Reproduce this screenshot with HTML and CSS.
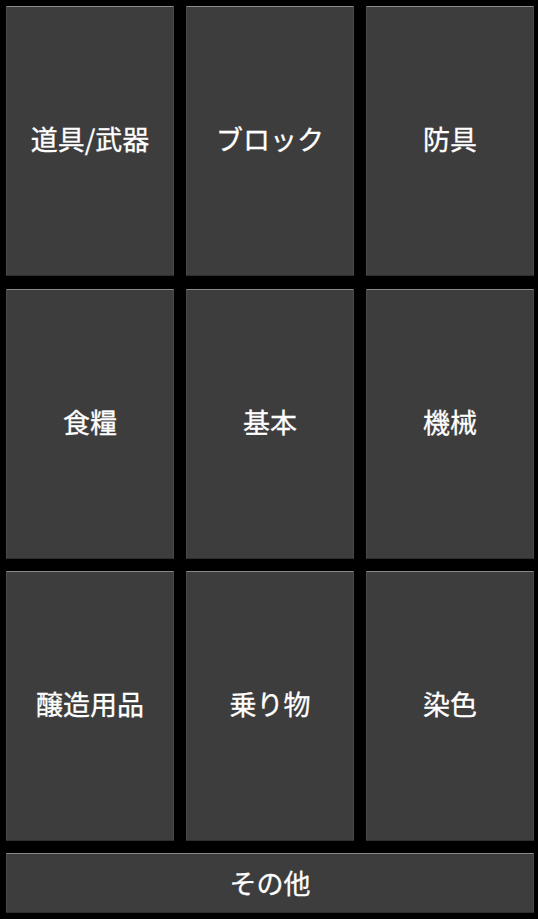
FILE: index.html
```html
<!DOCTYPE html>
<html lang="ja">
  <head>
    <meta charset="UTF-8" />
    <meta name="viewport" content="width=device-width, initial-scale=1.0" />
    <title>カテゴリ</title>
    <link rel="stylesheet" href="styles.css">
  </head>
  <body>
    <div class="menu">
      <div class="grid">
        <button class="tile">道具/武器</button>
        <button class="tile">ブロック</button>
        <button class="tile">防具</button>
        <button class="tile">食糧</button>
        <button class="tile">基本</button>
        <button class="tile">機械</button>
        <button class="tile">醸造用品</button>
        <button class="tile">乗り物</button>
        <button class="tile">染色</button>
      </div>
      <button class="tile wide">その他</button>
    </div>
  </body>
</html>
```

FILE: styles.css
```css
html,
body {
  margin: 0;
  background: #000;
}
body {
  font-family: "Noto Sans CJK JP", "Noto Sans", sans-serif;
}
.menu {
  padding: 6px;
  display: flex;
  flex-direction: column;
  gap: 12px;
  height: 919px;
  box-sizing: border-box;
}
.grid {
  display: grid;
  grid-template-columns: repeat(3, 168px);
  grid-template-rows: repeat(3, 270px);
  column-gap: 12px;
  row-gap: 12.5px;
}
.tile {
  font-family: inherit;
  font-size: 27px;
  font-weight: 400;
  color: #fff;
  background: #3d3d3d;
  border: none;
  border-top: 1px solid #8a8a8a;
  border-left: 1px solid #4a4a4a;
  border-right: 1px solid #4a4a4a;
  border-bottom: 1px solid #2e2e2e;
  border-radius: 1px;
  padding: 0 0 5px;
  margin: 0;
  cursor: pointer;
  -webkit-text-stroke: 0.3px #fff;
}
.wide {
  height: 60px;
  width: 528px;
  padding-bottom: 2px;
}
```
